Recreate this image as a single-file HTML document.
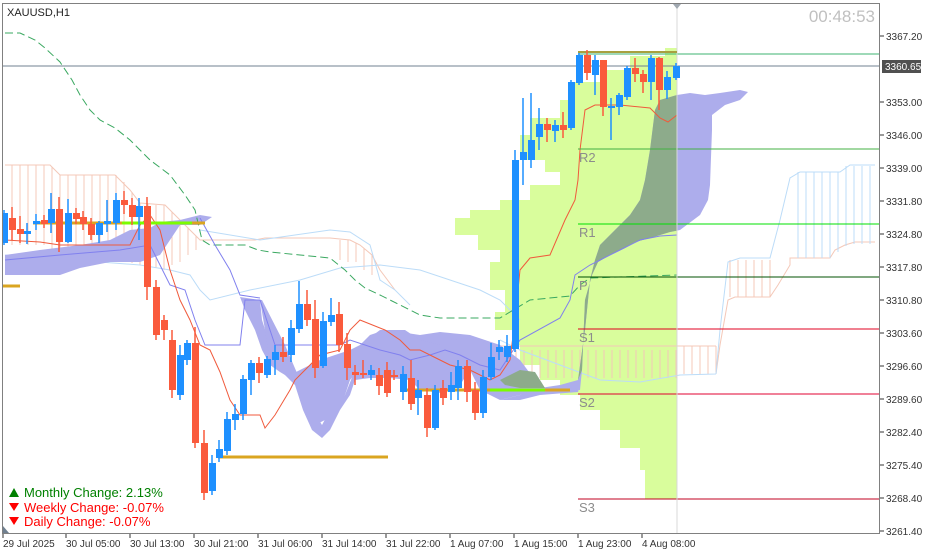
<!DOCTYPE html>
<html><head><meta charset="utf-8"><style>
html,body{margin:0;padding:0;background:#fff;}
svg{display:block;font-family:"Liberation Sans",sans-serif;}
</style></head><body>
<svg width="928" height="555" viewBox="0 0 928 555" xmlns="http://www.w3.org/2000/svg">
<defs>
<clipPath id="cl"><rect x="0" y="0" width="677" height="555"/></clipPath>
<clipPath id="plot"><rect x="3" y="4" width="877" height="529"/></clipPath>
</defs>
<rect width="928" height="555" fill="#fff"/>
<g clip-path="url(#plot)">
<polygon fill="#d9fd9c" points="677,48 665,48 665,56 630,56 630,70 600,70 600,82 572,82 572,100 560,100 560,118 530,118 530,135 520,135 520,160 545,160 545,172 560,172 560,185 530,185 530,200 500,200 500,210 470,210 470,218 455,218 455,235 478,235 478,250 500,250 500,262 490,262 490,290 505,290 505,312 495,312 495,330 515,330 515,345 520,345 520,365 540,365 540,380 560,380 560,395 580,395 580,410 600,410 600,430 620,430 620,448 640,448 640,470 645,470 645,499 677,499"/>
<g stroke="#f4c8b8" stroke-width="1" fill="none">
<path d="M5,165 H50 L60,175 H115 L130,190 L140,203 L165,205 L180,220 L200,240 H255 L265,238 H330 L350,240 L360,245 L372,255 L380,270 L395,290"/>
<path d="M12,165V245M20,165V245M28,165V245M36,165V245M44,165V245M52,167V250M60,175V255M68,175V257M76,175V258M84,175V260M92,175V260M100,175V260M108,175V260M116,175V262M124,182V262M132,192V263M140,203V265M148,204V265M156,205V268M164,205V270M172,212V265M180,220V262M188,228V255M196,236V250M340,240V260M348,240V262M356,243V262M364,248V270M372,255V275"/>
<path d="M484,350V378M492,350V378M500,350V378M508,350V378M516,350V378M524,350V378M532,350V378M540,350V378M548,350V378M556,350V378M564,350V378M572,350V378M580,350V378M588,350V378M596,350V378M604,350V378M612,350V378M620,350V378M628,350V378M636,350V378M644,350V378M652,350V378M660,350V378M668,350V378M676,350V378M684,346V374M692,346V374M700,346V374M708,346V374M716,346V372"/>
<path d="M480,346 H716 M716,374 L720,345 L728,300 L735,297 H770 L778,285 L790,265 V258 H830 L835,250 L845,245 L855,242 H875"/>
<path d="M730,260V297M738,260V297M746,260V297M754,260V297M762,260V297M770,260V297"/>
</g>
<g stroke="#bcdcf8" fill="none">
<path d="M5,255 L60,260 L100,262 L140,265 L170,270 L190,275 L200,290 L210,300 L250,290 L300,280 L340,268 L380,265 L420,270 L450,280 L480,290 L500,300 L520,320"/>
<path d="M500,340 L520,350 L560,365 L600,380 L640,382 L680,375 L716,374 M716,374 L720,330 L728,262 L740,258 H770 L780,220 L790,178 L800,172 H840 L850,165 H875"/>
<path d="M200,230 L260,240 L330,230 L350,232 L370,245 L380,280 L395,290 L410,305"/>
<path d="M798,172V258M806,172V258M814,172V258M822,172V258M830,172V258M838,172V252M846,166V246M854,166V244M862,166V244M870,166V244"/>
</g>
<path fill="#adadec" d="M5,255 L40,250 L80,245 L110,240 L130,230 L150,228 L160,222 L180,220 L200,215 L212,217 L200,225 L180,225 L170,240 L160,255 L140,262 L110,262 L80,268 L60,275 L40,275 L5,275 Z"/>
<path fill="#adadec" d="M240,297 L260,300 L262,320 L270,345 L280,365 L290,375 L300,370 L320,360 L350,350 L360,345 L370,335 L385,330 L400,332 L420,335 L440,332 L470,335 L500,345 L520,360 L535,380 L545,390 L520,395 L500,400 L495,395 L490,380 L480,365 L470,360 L460,365 L445,370 L435,373 L420,378 L400,375 L380,372 L360,368 L350,380 L345,395 L335,410 L325,420 L315,425 L305,410 L300,390 L290,378 L280,372 L270,365 L262,350 L255,330 L245,310 Z"/>
<path fill="#adadec" d="M260,300 L262,300 L285,345 L300,380 L310,405 L322,425 L330,410 L345,395 L355,370 L360,345 L380,330 L405,330 L420,340 L440,345 L450,340 L470,338 L490,345 L492,360 L495,390 L500,400 L520,395 L540,388 L570,385 L580,385 L578,392 L540,395 L520,400 L500,400 L480,390 L470,370 L460,385 L440,393 L420,390 L410,380 L390,378 L370,378 L355,380 L350,395 L340,410 L330,430 L322,438 L312,430 L303,410 L295,385 L285,375 L270,360 Z"/>
<path fill="#adadec" d="M580,390 L582,370 L585,300 L592,275 L598,262 L610,255 L625,248 L635,242 L650,238 L670,232 L680,230 L700,215 L708,200 L710,185 L712,130 L712,115 L725,105 L740,100 L748,92 L740,90 L720,93 L705,95 L690,93 L677,95 L660,100 L655,110 L650,150 L645,180 L640,200 L630,215 L620,225 L610,235 L600,245 L595,260 L590,280 L585,330 L578,380 L560,385 L540,388 Z"/>
<path fill="#8dab8b" clip-path="url(#cl)" d="M582,370 L585,300 L592,275 L598,262 L610,255 L625,248 L635,242 L650,238 L670,232 L680,230 L700,215 L708,200 L710,185 L712,130 L712,115 L725,105 L740,100 L748,92 L740,90 L720,93 L705,95 L690,93 L677,95 L660,100 L655,110 L650,150 L645,180 L640,200 L630,215 L620,225 L610,235 L600,245 L595,260 L590,280 L585,330 L578,380 Z"/>
<path fill="#8dab8b" d="M500,380 L520,370 L535,372 L545,388 L520,388 L505,385 Z"/>
<path fill="none" stroke="#3aa860" stroke-width="1" stroke-dasharray="8,4" d="M5,33 L20,33 L35,40 L45,48 L60,62 L72,80 L80,95 L90,110 L100,120 L115,128 L130,140 L150,160 L170,175 L185,195 L195,210 L202,240 L210,245 L245,245 L258,250 L270,252 L300,255 L330,258 L345,270 L355,280 L365,288 L380,295 L400,305 L420,315 L440,318 L500,318 L530,300 L570,296 L580,285 L590,278 L677,275"/>
<path fill="none" stroke="#8080ee" stroke-width="1" d="M5,260 L60,255 L120,250 L150,245 L160,265 L170,285 L185,290 L195,320 L205,345 L240,345 L245,300 L260,300 L275,345 L300,345 L340,345 L350,340 L380,350 L400,355 L410,360 L430,355 L445,350 L460,355 L480,365 L500,370 L510,355 L520,340 L560,318 L570,300 L575,275 L590,265 L620,250 L640,240 L660,236 L677,235 M200,218 L215,245 L230,270 L240,295 L260,298"/>
<path fill="none" stroke="#f05a3c" stroke-width="1" d="M5,240 L40,242 L60,245 L100,245 L130,245 L140,225 L150,215 L160,230 L170,270 L180,300 L190,320 L200,345 L210,350 L220,372 L230,400 L240,415 L260,415 L265,428 L275,415 L290,390 L295,380 L305,370 L320,355 L340,350 L350,330 L360,320 L385,330 L400,340 L410,350 L420,350 L440,360 L450,365 L470,370 L490,380 L500,375 L510,360 L515,320 L520,270 L530,258 L550,255 L565,220 L575,200 L578,180 L580,150 L585,110 L595,105 L620,105 L650,108 L660,118 L668,122 L677,115"/>
<line x1="3" y1="66" x2="880" y2="66" stroke="#708090"/>
<line x1="578" y1="54" x2="880" y2="54" stroke="#3cb371"/>
<line x1="578" y1="149" x2="880" y2="149" stroke="#43b043"/>
<line x1="578" y1="224" x2="880" y2="224" stroke="#00e000"/>
<line x1="578" y1="277" x2="880" y2="277" stroke="#005000"/>
<line x1="578" y1="329" x2="880" y2="329" stroke="#e00020"/>
<line x1="578" y1="394" x2="880" y2="394" stroke="#e00030"/>
<line x1="578" y1="499" x2="880" y2="499" stroke="#c00020"/>
<line x1="677" y1="4" x2="677" y2="533" stroke="#d8d8d8"/>
<g stroke="#daa520" stroke-width="3">
<line x1="33" y1="223" x2="205" y2="223"/>
<line x1="218" y1="457" x2="388" y2="457"/>
<line x1="3" y1="286" x2="20" y2="286"/>
<line x1="405" y1="390" x2="570" y2="390"/>
</g>
<line x1="578" y1="52" x2="677" y2="52" stroke="#a8a040" stroke-width="2"/>
<line x1="122" y1="223" x2="192" y2="223" stroke="#7cfc00" stroke-width="3"/>
<line x1="490" y1="390" x2="545" y2="390" stroke="#7cfc00" stroke-width="3"/>
<path fill="none" stroke="#1e90ff" stroke-width="1.5" d="M4,210V245M27,223V244M36,214V230M51,193V233M68,199V243M99,221V243M107,200V232M116,193V230M139,198V240M180,345V400M187,340V365M212,455V495M219,440V462M227,412V455M235,404V430M243,375V420M251,360V395M267,356V378M275,345V375M291,320V362M299,281V333M323,312V368M331,298V326M371,365V380M403,366V400M418,380V415M435,385V430M451,372V400M458,360V400M483,370V418M491,343V380M499,340V360M507,335V362M515,150V352M523,98V185M531,93V168M539,108V150M555,120V142M571,80V130M579,53V85M595,55V95M611,98V140M619,93V115M627,66V100M651,55V100M667,71V99M676,63V80"/>
<g fill="#1e90ff">
<rect x="1" y="213" width="7" height="30"/><rect x="24" y="231" width="7" height="3"/><rect x="33" y="221" width="7" height="3"/><rect x="48" y="209" width="7" height="14"/><rect x="65" y="213" width="7" height="29"/><rect x="96" y="223" width="7" height="12"/><rect x="104" y="221" width="7" height="3"/><rect x="113" y="200" width="7" height="23"/><rect x="136" y="206" width="7" height="11"/><rect x="177" y="355" width="7" height="40"/><rect x="184" y="343" width="7" height="17"/><rect x="209" y="463" width="7" height="28"/><rect x="216" y="449" width="7" height="9"/><rect x="224" y="419" width="7" height="32"/><rect x="232" y="414" width="7" height="6"/><rect x="240" y="379" width="7" height="35"/><rect x="248" y="363" width="7" height="17"/><rect x="264" y="359" width="7" height="16"/><rect x="272" y="352" width="7" height="8"/><rect x="288" y="328" width="7" height="27"/><rect x="296" y="304" width="7" height="25"/><rect x="320" y="321" width="7" height="45"/><rect x="328" y="315" width="7" height="7"/><rect x="368" y="370" width="7" height="5"/><rect x="400" y="374" width="7" height="18"/><rect x="415" y="390" width="7" height="8"/><rect x="432" y="390" width="7" height="38"/><rect x="448" y="385" width="7" height="7"/><rect x="455" y="366" width="7" height="22"/><rect x="480" y="377" width="7" height="36"/><rect x="488" y="357" width="7" height="20"/><rect x="496" y="347" width="7" height="5"/><rect x="504" y="346" width="7" height="11"/><rect x="512" y="160" width="7" height="189"/><rect x="520" y="152" width="7" height="8"/><rect x="528" y="140" width="7" height="20"/><rect x="536" y="124" width="7" height="13"/><rect x="552" y="125" width="7" height="6"/><rect x="568" y="82" width="7" height="46"/><rect x="576" y="55" width="7" height="28"/><rect x="592" y="60" width="7" height="15"/><rect x="608" y="106" width="7" height="2"/><rect x="616" y="95" width="7" height="12"/><rect x="624" y="68" width="7" height="29"/><rect x="648" y="58" width="7" height="24"/><rect x="664" y="77" width="7" height="13"/><rect x="673" y="66" width="7" height="12"/>
</g>
<path fill="none" stroke="#fa5a3c" stroke-width="1.5" d="M12,207V240M20,216V243M44,215V228M59,197V252M76,208V224M83,211V230M91,218V240M124,191V214M132,198V225M147,197V300M156,280V340M164,315V340M172,330V398M195,327V448M204,430V500M259,357V383M283,337V362M307,290V326M315,300V378M339,302V352M347,333V380M355,365V385M363,360V378M379,368V395M387,362V397M394,370V380M411,360V410M427,388V437M443,380V405M467,360V402M475,382V420M547,118V142M563,112V138M587,50V80M603,60V116M635,58V82M643,70V93M659,57V110"/>
<g fill="#fa5a3c">
<rect x="9" y="218" width="7" height="12"/><rect x="17" y="229" width="7" height="5"/><rect x="41" y="220" width="7" height="4"/><rect x="56" y="209" width="7" height="33"/><rect x="73" y="213" width="7" height="6"/><rect x="80" y="217" width="7" height="7"/><rect x="88" y="224" width="7" height="11"/><rect x="121" y="200" width="7" height="5"/><rect x="129" y="205" width="7" height="12"/><rect x="144" y="206" width="7" height="81"/><rect x="153" y="287" width="7" height="48"/><rect x="161" y="320" width="7" height="10"/><rect x="169" y="340" width="7" height="50"/><rect x="192" y="343" width="7" height="100"/><rect x="201" y="443" width="7" height="50"/><rect x="256" y="363" width="7" height="10"/><rect x="280" y="352" width="7" height="5"/><rect x="304" y="304" width="7" height="16"/><rect x="312" y="319" width="7" height="49"/><rect x="336" y="314" width="7" height="31"/><rect x="344" y="344" width="7" height="24"/><rect x="352" y="372" width="7" height="3"/><rect x="360" y="373" width="7" height="2"/><rect x="376" y="375" width="7" height="11"/><rect x="384" y="370" width="7" height="23"/><rect x="391" y="375" width="7" height="2"/><rect x="408" y="378" width="7" height="26"/><rect x="424" y="395" width="7" height="33"/><rect x="440" y="388" width="7" height="10"/><rect x="464" y="366" width="7" height="26"/><rect x="472" y="390" width="7" height="23"/><rect x="544" y="124" width="7" height="6"/><rect x="560" y="125" width="7" height="5"/><rect x="584" y="55" width="7" height="18"/><rect x="600" y="60" width="7" height="47"/><rect x="632" y="68" width="7" height="6"/><rect x="640" y="74" width="7" height="8"/><rect x="656" y="58" width="7" height="32"/>
</g>
<g font-size="13" fill="#8c8c8c">
<text x="579" y="162">R2</text><text x="579" y="237">R1</text><text x="579" y="290">P</text>
<text x="579" y="342">S1</text><text x="579" y="407">S2</text><text x="579" y="512">S3</text>
</g>
</g>
<rect x="2.5" y="3.5" width="877" height="530" fill="none" stroke="#808080"/>
<polygon points="673,4 681,4 677,9" fill="#a0a8b0"/>
<polygon points="3,533 3,526 9,533" fill="#708090"/>
<text x="7" y="16" font-size="11" fill="#222">XAUUSD,H1</text>
<text x="875" y="22" font-size="17" fill="#c0c0c0" text-anchor="end">00:48:53</text>
<g font-size="10" fill="#333">
<path stroke="#333" d="M880,36h4M880,102h4M880,135h4M880,168h4M880,201h4M880,234h4M880,267h4M880,300h4M880,333h4M880,366h4M880,399h4M880,432h4M880,465h4M880,498h4M880,531h4"/>
<text x="886" y="40">3367.20</text>
<text x="886" y="106">3353.00</text><text x="886" y="139">3346.00</text><text x="886" y="172">3339.00</text>
<text x="886" y="205">3331.80</text><text x="886" y="238">3324.80</text><text x="886" y="271">3317.80</text>
<text x="886" y="304">3310.80</text><text x="886" y="337">3303.60</text><text x="886" y="370">3296.60</text>
<text x="886" y="403">3289.60</text><text x="886" y="436">3282.40</text><text x="886" y="469">3275.40</text>
<text x="886" y="502">3268.40</text><text x="886" y="535">3261.40</text>
</g>
<rect x="882" y="60" width="39" height="13" fill="#505050"/>
<text x="885" y="70" font-size="10" fill="#fff">3360.65</text>
<path stroke="#333" d="M3,534v4M66,534v4M130,534v4M194,534v4M258,534v4M322,534v4M386,534v4M450,534v4M514,534v4M578,534v4M642,534v4"/>
<g font-size="10" fill="#333">
<text x="3" y="547">29 Jul 2025</text><text x="66" y="547">30 Jul 05:00</text><text x="130" y="547">30 Jul 13:00</text>
<text x="194" y="547">30 Jul 21:00</text><text x="258" y="547">31 Jul 06:00</text><text x="322" y="547">31 Jul 14:00</text>
<text x="386" y="547">31 Jul 22:00</text><text x="450" y="547">1 Aug 07:00</text><text x="514" y="547">1 Aug 15:00</text>
<text x="578" y="547">1 Aug 23:00</text><text x="642" y="547">4 Aug 08:00</text>
</g>
<g font-size="13">
<polygon points="9,497 19,497 14,488" fill="#008000"/>
<text x="24" y="497" fill="#008000">Monthly Change: 2.13%</text>
<polygon points="9,503 19,503 14,511" fill="#ff0000"/>
<text x="24" y="512" fill="#ff0000">Weekly Change: -0.07%</text>
<polygon points="9,517 19,517 14,525" fill="#ff0000"/>
<text x="24" y="526" fill="#ff0000">Daily Change: -0.07%</text>
</g>
</svg>
</body></html>
